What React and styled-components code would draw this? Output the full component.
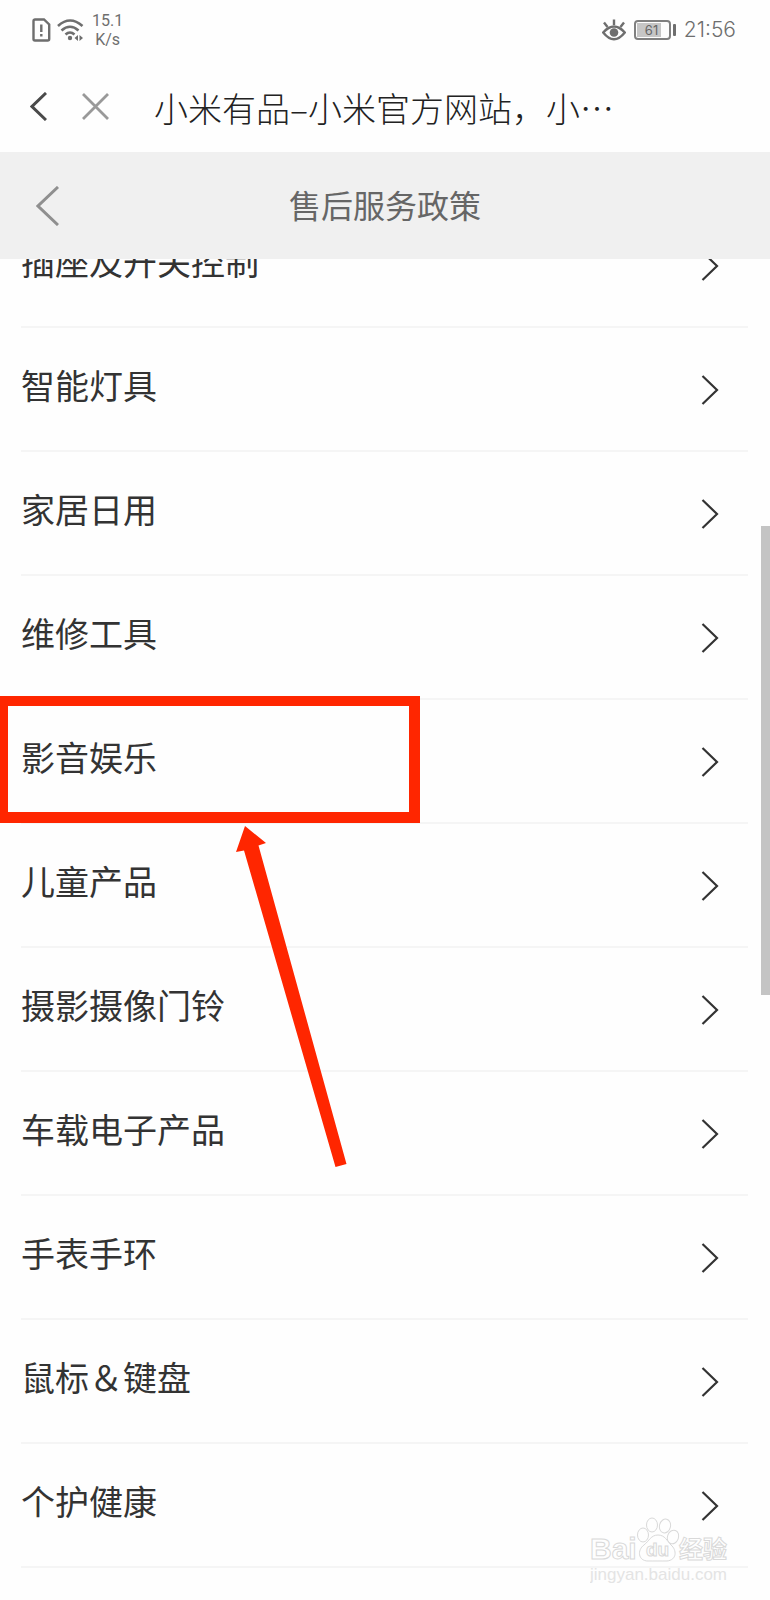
import styled, { createGlobalStyle } from 'styled-components';

const GlobalStyle = createGlobalStyle`
  * {
    box-sizing: border-box;
  }

  body {
    margin: 0;
    background: #fefefe;
    color: #333;
    font-family: 'Noto Sans CJK SC', 'Noto Sans', sans-serif;
  }
`;

const Page = styled.div`
  position: relative;
  min-height: 100vh;
  overflow: hidden;
`;

const StatusBar = styled.div`
  display: flex;
  align-items: center;
  justify-content: space-between;
  height: 60px;
  padding: 0 34px 0 32px;
  color: #6e6e6e;
`;

const StatusGroup = styled.div`
  display: flex;
  align-items: center;
  gap: ${({ $gap }) => $gap}px;
`;

const Speed = styled.span`
  margin-left: 2px;
  font: 400 16px/19px Roboto, sans-serif;
  text-align: center;
`;

const Battery = styled.span`
  display: flex;
  align-items: center;
`;

const BatteryBody = styled.span`
  width: 37px;
  height: 20px;
  border: 2px solid #808080;
  border-radius: 4px;
  padding: 1px;
`;

const BatteryLevel = styled.span`
  display: block;
  width: 24px;
  height: 14px;
  background: #c6c6c6;
  padding-left: 8px;
  font: 400 13px/14px Inter, sans-serif;
  color: #666;
`;

const BatteryCap = styled.span`
  width: 3px;
  height: 12px;
  margin-left: 2px;
  border-radius: 1px;
  background: #6e6e6e;
`;

const Clock = styled.time`
  font: 300 21px/24px Inter, sans-serif;
`;

const BrowserBar = styled.div`
  display: flex;
  align-items: center;
  height: 92px;
  padding: 0 32px 0 21px;
`;

const IconButton = styled.button`
  display: flex;
  align-items: center;
  justify-content: center;
  flex: none;
  width: ${({ $width }) => $width}px;
  height: 56px;
  padding: 0;
  border: 0;
  background: none;
  color: ${({ $color }) => $color};
  cursor: pointer;
`;

const PageTitle = styled.div`
  margin-left: 18px;
  padding-top: 4px;
  font-size: 34px;
  line-height: 40px;
  font-weight: 300;
  color: #222;
  white-space: nowrap;
`;

const Header = styled.header`
  position: relative;
  z-index: 1;
  display: grid;
  grid-template-columns: 96px 1fr 96px;
  align-items: center;
  height: 107px;
  background: #f0f0f0;
`;

const HeaderTitle = styled.h1`
  margin: 0;
  padding-bottom: 4px;
  font-size: 32px;
  line-height: 40px;
  font-weight: 400;
  text-align: center;
  color: #666;
`;

const ScrollArea = styled.main`
  position: relative;
  display: flow-root;
`;

/* scrolled so that the first row is half under the header */
const List = styled.ul`
  list-style: none;
  margin: -55px 0 0;
  padding: 0 22px 0 21px;
`;

const Item = styled.li`
  position: relative;
  border-bottom: 2px solid #f5f5f5;
`;

const ItemLink = styled.a`
  display: flex;
  align-items: center;
  justify-content: space-between;
  height: 122px;
  padding: 2px 29px 0 0;
  color: #333;
  font-size: 34px;
  line-height: 48px;
  text-decoration: none;
`;

const ItemLabel = styled.span`
  padding-bottom: 10px;
`;

const Highlight = styled.div`
  position: absolute;
  top: -4px;
  left: -21px;
  width: 420px;
  height: 127px;
  border: solid #ff2600;
  border-width: 10px 11px 11px 8px;
  pointer-events: none;
`;

const Arrow = styled.svg`
  position: absolute;
  top: 126px;
  left: 215px;
  z-index: 1;
  pointer-events: none;
`;

const Scrollbar = styled.div`
  position: absolute;
  top: 267px;
  right: 0;
  width: 9px;
  height: 469px;
  background: #c4c4c4;
`;

const Watermark = styled.svg`
  position: absolute;
  right: 38px;
  bottom: 12px;
  pointer-events: none;
`;

const categories = [
  '插座及开关控制',
  '智能灯具',
  '家居日用',
  '维修工具',
  '影音娱乐',
  '儿童产品',
  '摄影摄像门铃',
  '车载电子产品',
  '手表手环',
  '鼠标\uFF06键盘',
  '个护健康',
];

const highlighted = '影音娱乐';

function SimIcon() {
  return (
    <svg width="19" height="24" viewBox="0 0 19 24" fill="none" stroke="currentColor" strokeWidth="2.4">
      <path d="M3 1.500h9l5.200 5V21a1.500 1.500 0 0 1-1.500 1.500H3A1.500 1.500 0 0 1 1.500 21V3A1.500 1.500 0 0 1 3 1.500z" />
      <path d="M9.300 6.500v7.500M9.300 16v2.500" strokeWidth="2.400" />
    </svg>
  );
}

function WifiIcon() {
  return (
    <svg width="27" height="24" viewBox="0 0 27 24" fill="none" stroke="currentColor" strokeWidth="2.600">
      <path d="M1 8Q13 -3 25.500 8" />
      <path d="M4.500 12.500Q13 5 21.500 12.500" />
      <path d="M8.500 16.500Q13 12.500 17.500 16.500" />
      <circle cx="13" cy="20" r="2.200" fill="currentColor" stroke="none" />
      <path d="M21 17v6l-3.500-3zM22.500 17v6l3.500-3z" fill="currentColor" stroke="none" />
    </svg>
  );
}

function EyeIcon() {
  return (
    <svg width="24" height="22" viewBox="0 0 24 22" fill="none" stroke="currentColor" strokeWidth="2.400">
      <path d="M1.200 13.500Q12 1.500 22.800 13.500Q12 27 1.200 13.500z" />
      <circle cx="12" cy="13.500" r="4.300" fill="currentColor" stroke="none" />
      <path d="M12 6V.5M5.500 8L2 3.500M18.500 8L22 3.500" />
    </svg>
  );
}

function BackIcon({ width, height, stroke }) {
  return (
    <svg width={width} height={height} fill="none" stroke="currentColor" strokeWidth={stroke}>
      <path d={`M${width - 1} 1L2 ${height / 2}L${width - 1} ${height - 1}`} />
    </svg>
  );
}

function CloseIcon() {
  return (
    <svg width="27" height="27" fill="none" stroke="currentColor" strokeWidth="2.800">
      <path d="M1 1l25 25M26 1L1 26" />
    </svg>
  );
}

function ChevronIcon() {
  return (
    <svg width="18" height="31" fill="none" stroke="currentColor" strokeWidth="2.200" aria-hidden="true">
      <path d="M1.500 1L16 15L1.500 29" />
    </svg>
  );
}

function BaiduWatermark() {
  return (
    <Watermark width="142" height="72" viewBox="0 0 142 72" fill="#fefefe" stroke="#d9d9d9" strokeWidth="1">
      <text x="0" y="43" fontFamily="Liberation Sans, sans-serif" fontWeight="700" fontSize="30">Bai</text>
      <ellipse cx="53" cy="19" rx="5.500" ry="7" />
      <ellipse cx="62" cy="9" rx="5.500" ry="7" />
      <ellipse cx="75" cy="10" rx="5.500" ry="7" transform="rotate(14 75 10)" />
      <ellipse cx="83" cy="21" rx="5.500" ry="7" transform="rotate(20 83 21)" />
      <path d="M68 19C61 19 59 25 54 29C47 34 48 45 58 45C64 45 72 45 77 45C87 44 87 34 81 29C77 25 75 19 68 19z" />
      <text x="56" y="40" fontFamily="Liberation Sans, sans-serif" fontWeight="700" fontSize="19">du</text>
      <text x="89" y="42" fontFamily="Noto Sans CJK SC, sans-serif" fontWeight="700" fontSize="24">经验</text>
      <text x="0" y="64" fontFamily="Liberation Sans, sans-serif" fontSize="17" fill="#e4e4e4" stroke="none">
        jingyan.baidu.com
      </text>
    </Watermark>
  );
}

function App() {
  return (
    <Page>
      <GlobalStyle />
      <StatusBar>
        <StatusGroup $gap={6}>
          <SimIcon />
          <WifiIcon />
          <Speed>
            15.1
            <br />
            K/s
          </Speed>
        </StatusGroup>
        <StatusGroup $gap={8}>
          <EyeIcon />
          <Battery>
            <BatteryBody>
              <BatteryLevel>61</BatteryLevel>
            </BatteryBody>
            <BatteryCap />
          </Battery>
          <Clock>21:56</Clock>
        </StatusGroup>
      </StatusBar>

      <BrowserBar>
        <IconButton type="button" aria-label="返回" $width={34} $color="#4a4a4a">
          <BackIcon width={17} height={29} stroke={3} />
        </IconButton>
        <IconButton type="button" aria-label="关闭" $width={81} $color="#999">
          <CloseIcon />
        </IconButton>
        <PageTitle>{'小米有品–小米官方网站\uFF0C小…'}</PageTitle>
      </BrowserBar>

      <Header>
        <IconButton type="button" aria-label="返回" $width={94} $color="#8f8f8f">
          <BackIcon width={23} height={40} stroke={3} />
        </IconButton>
        <HeaderTitle>售后服务政策</HeaderTitle>
      </Header>

      <ScrollArea>
        <List>
          {categories.map((name) => (
            <Item key={name}>
              <ItemLink href="#">
                <ItemLabel>{name}</ItemLabel>
                <ChevronIcon />
              </ItemLink>
              {name === highlighted && (
                <>
                  <Highlight />
                  <Arrow width="112" height="342" fill="#ff2600">
                    <path d="M9 0L30 17L22.500 19.500L110.500 338L99.500 341L8 24.500L0 26z" />
                  </Arrow>
                </>
              )}
            </Item>
          ))}
        </List>
        <Scrollbar />
      </ScrollArea>

      <BaiduWatermark />
    </Page>
  );
}

export default App;
